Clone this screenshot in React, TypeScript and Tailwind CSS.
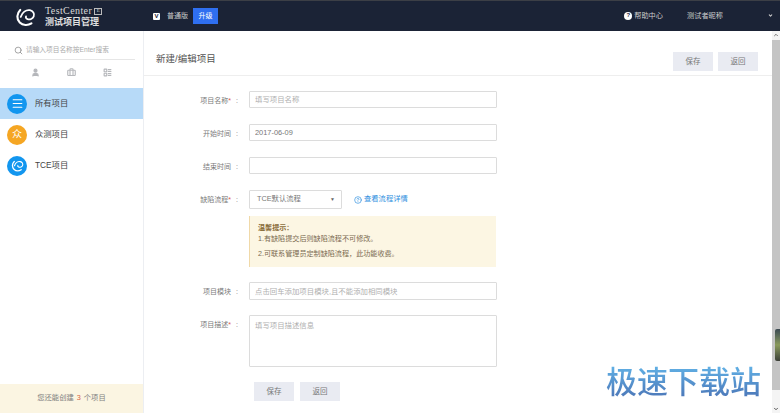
import { ChevronDown, ChevronUp, Menu, Search, User, Briefcase, LayoutList, CircleHelp } from "lucide-react";

const font = "font-['Liberation_Sans','Noto_Sans_CJK_SC',sans-serif]";

function LogoSwirl({ className }: { className: string }) {
  return (
    <svg viewBox="0 0 24 24" className={className} fill="none" stroke="currentColor" strokeLinecap="round">
      <path d="M6 4.5C1.8 8.5 1.6 15 5.4 18.8c3.6 3.5 9.2 3.8 13.4 1" strokeWidth="2.4" />
      <path d="M6.5 12.5C8 7.5 12.5 4 17 4.8c3.6.7 5.6 3.8 4.4 7-1 2.7-4.4 4.2-7 3.2-1.6-.7-2.3-2-1.8-3.2" strokeWidth="2" />
    </svg>
  );
}

function Field({ label, required, children, className }: { label: string; required?: boolean; children: React.ReactNode; className?: string }) {
  return (
    <div className={`flex items-start ${className ?? ""}`}>
      <label className="flex w-[94px] shrink-0 justify-end pt-[4px] text-[7px] leading-[12px] text-[#7a7a7a]">
        {label}
        {required && <span className="text-[#e05a4e]">*</span>}
        <span className="ml-[5px]">:</span>
      </label>
      <div className="ml-[11px]">{children}</div>
    </div>
  );
}

const inputCls =
  "block h-[17px] w-[248px] rounded-[1px] border border-[#dcdcdc] bg-white px-[5px] text-[7.4px] leading-[15px] text-[#777] placeholder:text-[#b0b0b0] outline-none";

const btnCls = "flex h-[19px] w-[40px] items-center justify-center bg-[#e9ebf2] text-[7.5px] text-[#777]";

export default function App() {
  return (
    <div className={`relative flex h-[413px] w-[780px] flex-col overflow-hidden bg-white ${font}`}>
      <header className="flex h-[31px] shrink-0 items-center border-t border-[#3c3f46] bg-[#1b2336] text-white">
        <div className="flex w-[143px] items-center pl-[15px]">
          <LogoSwirl className="h-[21px] w-[21px] text-white" />
          <div className="ml-[9px] mt-[2px] leading-none">
            <div className="flex items-center gap-[2px] font-['Liberation_Serif','Noto_Sans_CJK_SC',serif] text-[10px] leading-[10px] tracking-[0.4px] text-[#d8d8d8]">
              TestCenter
              <span className="flex h-[7px] w-[8px] items-center justify-center border border-[#bbb] text-[5px] tracking-normal">E</span>
            </div>
            <div className="mt-[1px] text-[9px] leading-[11px] font-bold text-[#e0e0e0]">测试项目管理</div>
          </div>
        </div>
        <div className="flex items-center pl-[10px]">
          <span className="flex h-[7px] w-[7px] items-center justify-center rounded-[1px] bg-white text-[6px] font-bold text-[#1b2336]">V</span>
          <span className="ml-[7px] text-[7px] text-[#ccc]">普通版</span>
          <span className="ml-[5px] flex h-[16px] w-[25px] items-center justify-center bg-[#2f6ff0] text-[7px] text-white">升级</span>
        </div>
        <div className="ml-auto flex items-center">
          <span className="flex h-[8px] w-[8px] items-center justify-center rounded-full bg-white text-[6px] font-bold text-[#1b2336]">?</span>
          <span className="ml-[2px] text-[7.2px] text-[#ccc]">帮助中心</span>
          <span className="ml-[24px] w-[81px] text-[7.2px] text-[#ccc]">测试者昵称</span>
          <ChevronDown className="mr-[7px] h-[5px] w-[5px] text-[#ccc]" strokeWidth={5} />
        </div>
      </header>

      <div className="flex min-h-0 flex-1">
        <aside className="flex w-[144px] shrink-0 flex-col border-r border-[#eceef2] bg-white">
          <div className="mx-[8px] mt-[12px] flex h-[17px] items-center border-b border-[#e6e6e6] pb-[2px] pl-[6px]">
            <Search className="h-[9px] w-[9px] text-[#888]" />
            <span className="ml-[3px] text-[6.7px] text-[#aaa]">请输入项目名称按Enter搜索</span>
          </div>
          <div className="mt-[8px] flex justify-between px-[31px] text-[#b5b7bb]">
            <User className="h-[9px] w-[9px]" strokeWidth={3} fill="currentColor" />
            <Briefcase className="h-[9px] w-[9px]" strokeWidth={3} />
            <LayoutList className="h-[9px] w-[9px]" strokeWidth={3} />
          </div>
          <nav className="mt-[11px] flex flex-col">
            <div className="flex h-[31px] items-center bg-[#b7daf8] pl-[7px]">
              <span className="flex h-[20px] w-[20px] items-center justify-center rounded-full bg-[#1296ef] text-white">
                <Menu className="h-[13px] w-[13px]" strokeWidth={2} />
              </span>
              <span className="ml-[8px] text-[8.3px] text-[#444]">所有项目</span>
            </div>
            <div className="flex h-[31px] items-center pl-[7px]">
              <span className="flex h-[20px] w-[20px] items-center justify-center rounded-full bg-[#f5a623] text-[10px] text-white">众</span>
              <span className="ml-[8px] text-[8.3px] text-[#444]">众测项目</span>
            </div>
            <div className="flex h-[31px] items-center pl-[7px]">
              <span className="flex h-[20px] w-[20px] items-center justify-center rounded-full bg-[#1296ef] text-white">
                <LogoSwirl className="h-[13px] w-[13px]" />
              </span>
              <span className="ml-[8px] text-[8.3px] text-[#444]">TCE项目</span>
            </div>
          </nav>
          <div className="mt-auto flex h-[29px] items-center justify-center bg-[#fbf5e2] text-[7.3px] text-[#808080]">
            您还能创建<span className="mx-[3px] text-[#d9603f]">3</span>个项目
          </div>
        </aside>

        <main className="flex min-w-0 flex-1 flex-col">
          <div className="flex h-[45px] shrink-0 items-start justify-between border-b border-[#eeeeee] pl-[12px] pr-[14px] pt-[21px]">
            <h1 className="text-[9.5px] leading-[14px] font-normal text-[#555]">新建/编辑项目</h1>
            <div className="flex gap-[5px]">
              <button className={btnCls}>保存</button>
              <button className={btnCls}>返回</button>
            </div>
          </div>

          <form className="flex flex-col pt-[15px]">
            <Field label="项目名称" required>
              <input className={inputCls} placeholder="填写项目名称" />
            </Field>
            <Field label="开始时间" className="mt-[16px]">
              <input className={inputCls} defaultValue="2017-06-09" />
            </Field>
            <Field label="结束时间" className="mt-[16px]">
              <input className={inputCls} />
            </Field>
            <Field label="缺陷流程" required className="mt-[16px]">
              <div className="flex flex-col">
                <div className="flex items-center">
                  <div className="flex h-[19px] w-[93px] items-center justify-between rounded-[1px] border border-[#dcdcdc] pl-[7px] pr-[6px] text-[7.3px] text-[#777]">
                    TCE默认流程
                    <span className="text-[5px] text-[#666]">▼</span>
                  </div>
                  <span className="ml-[12px] flex items-center text-[7.3px] text-[#2f8fe0]">
                    <CircleHelp className="mr-[2px] h-[8px] w-[8px]" />
                    查看流程详情
                  </span>
                </div>
                <div className="mt-[7px] h-[51px] w-[247px] border-l border-[#f0d9a8] bg-[#fcf6e3] pl-[8px] pt-[7px] text-[7.1px] leading-[11px] text-[#7a6a50]">
                  <div className="font-bold text-[#8a6d3b]">温馨提示：</div>
                  <div>1.有缺陷提交后则缺陷流程不可修改。</div>
                  <div className="mt-[4px]">2.可联系管理员定制缺陷流程，此功能收费。</div>
                </div>
              </div>
            </Field>
            <Field label="项目模块" className="mt-[15px]">
              <input className={`${inputCls} h-[18px]`} placeholder="点击回车添加项目模块,且不能添加相同模块" />
            </Field>
            <Field label="项目描述" required className="mt-[15px]">
              <textarea className="block h-[52px] w-[248px] resize-none rounded-[1px] border border-[#dcdcdc] px-[5px] py-[4px] text-[7.4px] leading-[12px] placeholder:text-[#b0b0b0] outline-none" placeholder="填写项目描述信息" />
            </Field>
            <div className="mt-[15px] flex gap-[6px] pl-[110px]">
              <button type="button" className={btnCls}>保存</button>
              <button type="button" className={btnCls}>返回</button>
            </div>
          </form>
        </main>

        <div className="flex w-[8px] shrink-0 flex-col items-center bg-[#f4f4f4]">
          <ChevronUp className="mt-[1px] h-[6px] w-[6px] text-[#777]" strokeWidth={4} />
          <div className="mt-[2px] h-[350px] w-full bg-[#c4c4c4]" />
          <ChevronDown className="mt-auto mb-[1px] h-[6px] w-[6px] text-[#555]" strokeWidth={4} />
        </div>
      </div>

      <div className="absolute right-0 top-[329px] h-[32px] w-[5px] rounded-l-[2px] bg-gradient-to-b from-[#3c4a52] via-[#8a9a5a] to-[#3c4038]" />
      <div className="absolute left-[606px] top-[364px] bg-gradient-to-b from-[#62b4e8] to-[#4a72b4] bg-clip-text text-[31px] font-medium leading-[37px] text-transparent">
        极速下载站
      </div>
    </div>
  );
}
